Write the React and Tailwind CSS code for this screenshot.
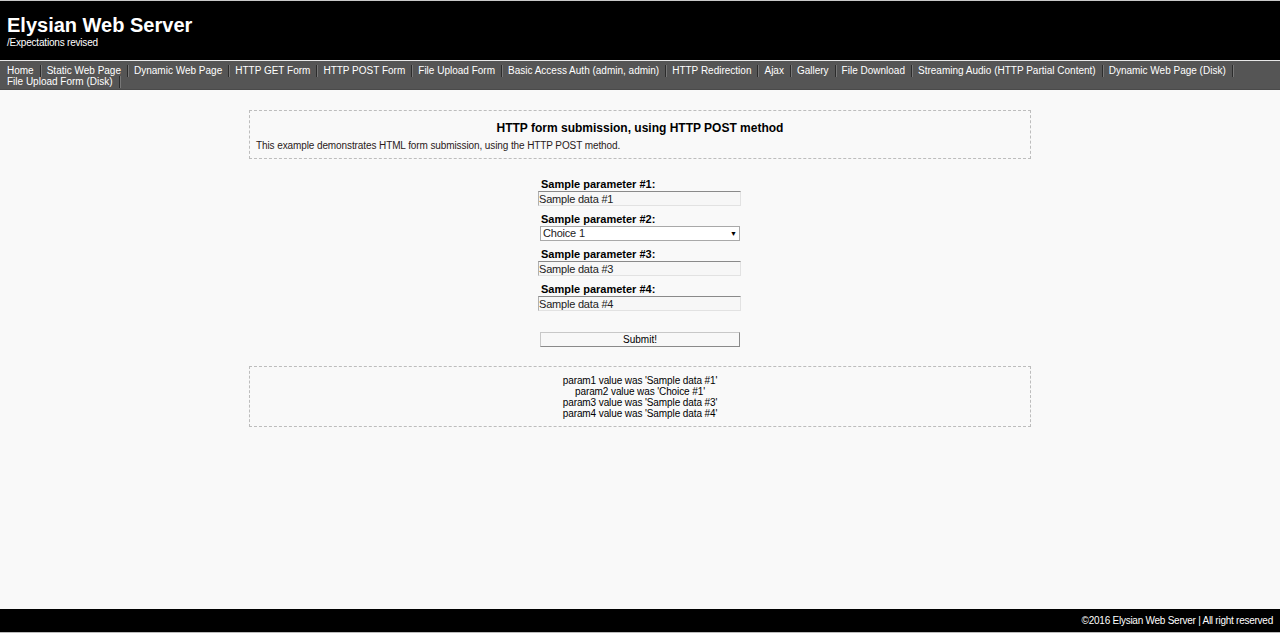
import React from 'react';

const NAV = [
    'Home', 'Static Web Page', 'Dynamic Web Page', 'HTTP GET Form', 'HTTP POST Form', 'File Upload Form',
    'Basic Access Auth (admin, admin)', 'HTTP Redirection', 'Ajax', 'Gallery', 'File Download',
    'Streaming Audio (HTTP Partial Content)', 'Dynamic Web Page (Disk)', 'File Upload Form (Disk)'
];

const RESULTS = [
    "param1 value was 'Sample data #1'",
    "param2 value was 'Choice #1'",
    "param3 value was 'Sample data #3'",
    "param4 value was 'Sample data #4'"
];

function TextField({ label, value }) {
    return (
        <div className="flex flex-col">
            <label className="text-[11px] leading-[14px] font-bold text-black pl-px">{label}</label>
            <input readOnly value={value} className="w-[203px] -ml-[2px] h-[15px] px-0 text-[11px] leading-[13px] tracking-[-0.2px] text-[#222] bg-[#f7f7f7] border border-[#e2e2e2] border-t-[#8a8a8a] border-l-[#b0b0b0] outline-none" />
        </div>
    );
}

export default function App() {
    return (
        <div className="min-h-screen flex flex-col bg-[#f9f9f9] font-['Liberation_Sans',Arial,sans-serif]">
            {/* header */}
            <div className="border-t border-[#c8c8c8] bg-black h-[61px] pl-[7px] pt-[12px] border-b border-b-[#e8e8e8]">
                <h1 className="text-[20px] leading-[24px] font-bold text-white">Elysian Web Server</h1>
                <p className="text-[10px] leading-[11px] tracking-[-0.2px] text-white">/Expectations revised</p>
            </div>

            <nav className="bg-[#555555] flex flex-wrap content-start pl-px pt-[4px] h-[29px] border-b border-[#4a4a4a]">
                {NAV.map(n => (
                    <div key={n} className="flex items-center h-[11px]">
                        <span className="px-[6px] text-[10px] leading-[11px] text-white whitespace-nowrap">{n}</span>
                        <span className="w-px h-[12px] bg-[#2c2c2c] shadow-[1px_0_0_#777]"></span>
                    </div>
                ))}
            </nav>

            <main className="flex-1 flex flex-col items-center pt-[20px]">
                <div className="w-[782px] border border-dashed border-[#bdbdbd] pt-[10px] pb-[6px] px-[6px]">
                    <h2 className="text-center text-[12px] leading-[15px] font-bold text-black">HTTP form submission, using HTTP POST method</h2>
                    <p className="text-[10px] leading-[13px] tracking-[-0.1px] text-[#2a1a1a] mt-[3px]">This example demonstrates HTML form submission, using the HTTP POST method.</p>
                </div>

                <form className="w-[200px] mt-[18px] flex flex-col gap-[6px]" onSubmit={e => e.preventDefault()}>
                    <TextField label="Sample parameter #1:" value="Sample data #1" />
                    <div className="flex flex-col">
                        <label className="text-[11px] leading-[14px] font-bold text-black pl-px">Sample parameter #2:</label>
                        <div className="w-[200px] h-[15px] bg-white border border-[#a9a9a9] flex items-center justify-between px-[2px]">
                            <span className="text-[11px] leading-[13px] tracking-[-0.2px] text-[#222]">Choice 1</span>
                            <span className="text-[7px] leading-[7px] text-black">▼</span>
                        </div>
                    </div>
                    <TextField label="Sample parameter #3:" value="Sample data #3" />
                    <TextField label="Sample parameter #4:" value="Sample data #4" />
                    <button type="submit" className="mt-[15px] w-[200px] h-[15px] text-[10px] leading-[13px] text-black bg-[#f8f8f8] border border-[#8a8a8a] border-t-[#c8c8c8] border-l-[#c8c8c8]">Submit!</button>
                </form>

                <div className="w-[782px] mt-[19px] border border-dashed border-[#bdbdbd] pt-[8px] pb-[7px] flex flex-col items-center">
                    {RESULTS.map(r => (
                        <p key={r} className="text-[10px] leading-[11px] tracking-[-0.1px] text-black">{r}</p>
                    ))}
                </div>
            </main>

            <footer className="bg-black h-[24px] border-b border-[#bbb] flex items-center justify-end pr-[7px]">
                <span className="text-[10px] leading-[13px] tracking-[-0.25px] text-white">©2016 Elysian Web Server | All right reserved</span>
            </footer>
        </div>
    );
}
